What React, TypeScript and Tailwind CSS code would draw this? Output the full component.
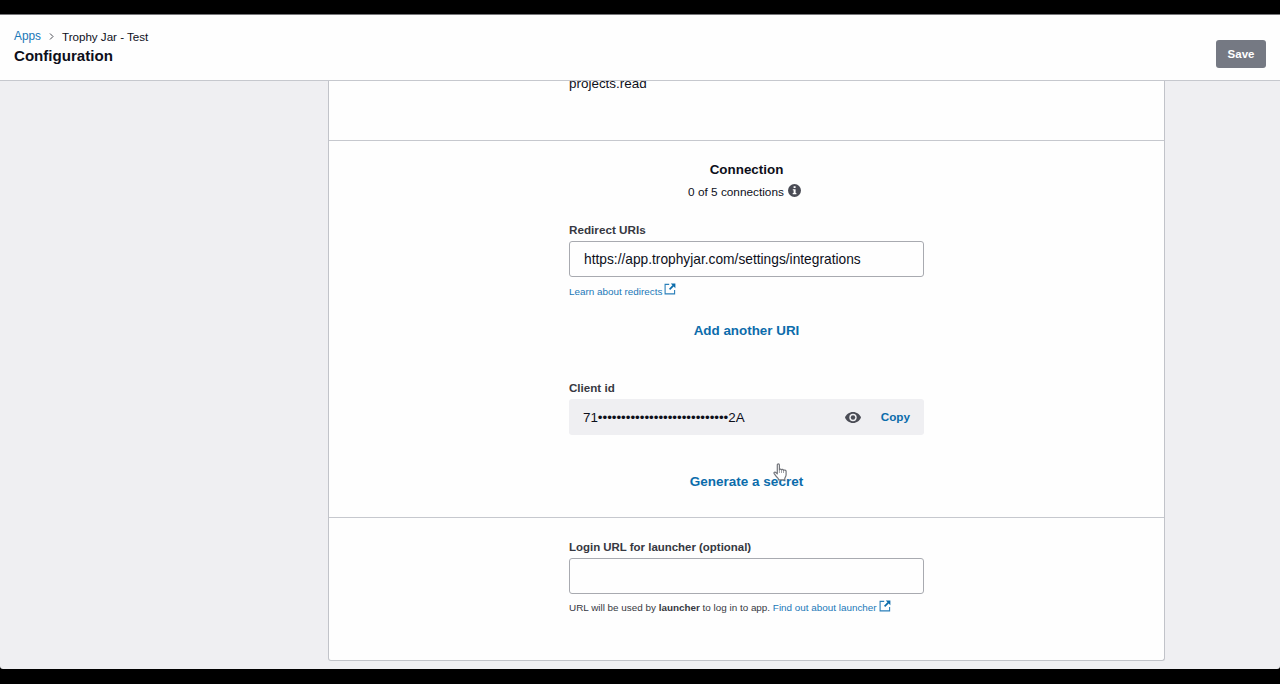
import React from 'react';

const ExternalLinkIcon: React.FC<{ className?: string }> = ({ className }) => (
    <svg className={`inline-block h-3 w-3 ${className ?? ''}`} viewBox="0 0 12 12" fill="none">
        <path d="M5.2 1.4H1.1V10.9H10.6V7" stroke="#2a7fb9" strokeWidth="1.1" />
        <path d="M5.6 6.4L9.3 2.7" stroke="#0b6cab" strokeWidth="1.7" />
        <path d="M6.8 0.6H11.4V5.2Z" fill="#0b6cab" />
    </svg>
);

const InfoIcon: React.FC = () => (
    <svg className="h-[13px] w-[13px]" viewBox="0 0 13 13">
        <circle cx="6.5" cy="6.5" r="6.5" fill="#4a4c55" />
        <path d="M5.6 2.3h2v1.8h-2zM4.8 5.2h2.8v3.9h.8v1.2H4.7V9.1h.9V6.3h-.8z" fill="#fff" />
    </svg>
);

const EyeIcon: React.FC = () => (
    <svg className="h-[11px] w-4" viewBox="0 0 16 11">
        <path
            d="M8 0C4.3 0 1.4 2.3 0 5.5 1.4 8.7 4.3 11 8 11s6.6-2.3 8-5.5C14.6 2.3 11.7 0 8 0z"
            fill="#4a4c55"
        />
        <circle cx="8" cy="5.5" r="3.7" fill="#efeff2" />
        <circle cx="8" cy="5.5" r="2.2" fill="#4a4c55" />
    </svg>
);

const HandCursor: React.FC = () => (
    <svg className="absolute left-[83px] top-[-9px] h-[18px] w-[15px]" viewBox="0 0 15 18">
        <path
            d="M4.3 10.8V2.1c0-1.7 2.1-1.7 2.1 0v4.7c.2-1.1 2-.9 2.1.2.4-.9 1.9-.7 2 .4.5-.7 2.4-.4 2.6.8v3.6c0 1.5-.9 2.3-1.3 3.6v1.5H5.3v-1.3C4 14.3 2.5 12.6 1.2 10.6.5 9.3 2 8.6 2.9 9.5z"
            fill="#fff"
            stroke="#74767c"
            strokeWidth="1.2"
            strokeLinejoin="round"
        />
        <path d="M6.4 7v3M8.5 7.2V10M10.5 7.7V10" stroke="#8a8c92" strokeWidth=".8" />
    </svg>
);

const Header: React.FC = () => (
    <header className="flex h-[67px] shrink-0 items-start justify-between border-b border-t border-b-[#c6c8ce] border-t-[#77777a] bg-[#fefefe] pl-3.5 pr-3.5">
        <div className="pt-3.5">
            <nav className="flex h-4 items-center text-[11.6px]">
                <a className="text-[11.85px] text-[#1a78b8]">Apps</a>
                <svg className="mb-px ml-2 mr-2 h-[7px] w-[5px]" viewBox="0 0 5 7" fill="none">
                    <path d="M1 .5L4 3.5 1 6.5" stroke="#4a4c55" />
                </svg>
                <span className="pb-px">Trophy Jar - Test</span>
            </nav>
            <h1 className="mt-px text-[15.1px] font-bold leading-5">Configuration</h1>
        </div>
        <button className="mt-[25px] h-7 w-[50px] rounded-[3px] bg-[#757983] pt-px text-[11.5px] font-bold text-white">
            Save
        </button>
    </header>
);

export default function App() {
    return (
        <div className="flex h-[684px] w-[1280px] flex-col overflow-hidden bg-black pb-[15px] pt-3.5 font-['Liberation_Sans',Arial,sans-serif] text-[#0d0f1a]">
            <Header />
            <main className="min-h-0 flex-1 overflow-hidden rounded-b-[3px] bg-[#efeff2] pl-[328px]">
                <div className="h-[580px] w-[837px] rounded-b-[3px] border border-t-0 border-[#c1c3c9] bg-[#fefefe]">
                    <section className="h-[60px] overflow-hidden border-b border-[#c6c8ce] pl-60">
                        <p className="-mt-[5px] text-[13.45px] leading-4">projects.read</p>
                    </section>

                    <section className="flex h-[377px] flex-col items-center border-b border-[#c6c8ce] pt-5">
                        <h2 className="text-[13.4px] font-bold leading-[18px]">Connection</h2>
                        <div className="mt-[5px] flex h-4 items-start gap-1 pr-1 text-[11.8px] leading-4">
                            <span>0 of 5 connections</span>
                            <InfoIcon />
                        </div>

                        <div className="mt-[22px] w-[355px]">
                            <label className="block text-[11.7px] font-bold leading-4 text-[#363841]">Redirect URIs</label>
                            <div className="mt-[3px] flex h-9 items-center rounded-[3px] border border-[#a8aab0] px-3.5 pt-0.5 text-[13.75px]">
                                https://app.trophyjar.com/settings/integrations
                            </div>
                            <div className="mt-1.5 flex h-4 items-start gap-0.5 text-[9.9px] leading-4 text-[#1a78b8]">
                                <a className="pt-px">Learn about redirects</a>
                                <ExternalLinkIcon />
                            </div>
                        </div>
                        <button className="mt-[23px] text-[13.4px] font-bold leading-[18px] text-[#0b6cab]">Add another URI</button>

                        <div className="mt-10 w-[355px]">
                            <label className="block text-[11.6px] font-bold leading-4 text-[#363841]">Client id</label>
                            <div className="mt-[3px] flex h-9 items-center rounded-[3px] bg-[#efeff2] px-3.5 text-[13.4px]">
                                <span className="pt-0.5 tracking-[-0.03px]">71••••••••••••••••••••••••••••2A</span>
                                <span className="ml-auto mr-5">
                                    <EyeIcon />
                                </span>
                                <button className="text-[11.7px] font-bold text-[#0b6cab]">Copy</button>
                            </div>
                        </div>
                        <div className="relative mt-[37px]">
                            <button className="block pt-px text-[13.5px] font-bold leading-[18px] text-[#0b6cab]">Generate a secret</button>
                            <HandCursor />
                        </div>
                    </section>

                    <section className="pl-60 pt-[21px]">
                        <label className="block text-[11.45px] font-bold leading-4 text-[#363841]">
                            Login URL for launcher (optional)
                        </label>
                        <div className="mt-[3px] h-9 w-[355px] rounded-[3px] border border-[#a8aab0]" />
                        <p className="mt-1.5 flex h-4 items-start whitespace-pre text-[9.9px] leading-4 text-[#363841]">
                            <span>URL will be used by </span>
                            <b>launcher</b>
                            <span> to log in to app. </span>
                            <a className="flex gap-0.5 text-[#1a78b8]">
                                Find out about launcher
                                <ExternalLinkIcon />
                            </a>
                        </p>
                    </section>
                </div>
            </main>
        </div>
    );
}
